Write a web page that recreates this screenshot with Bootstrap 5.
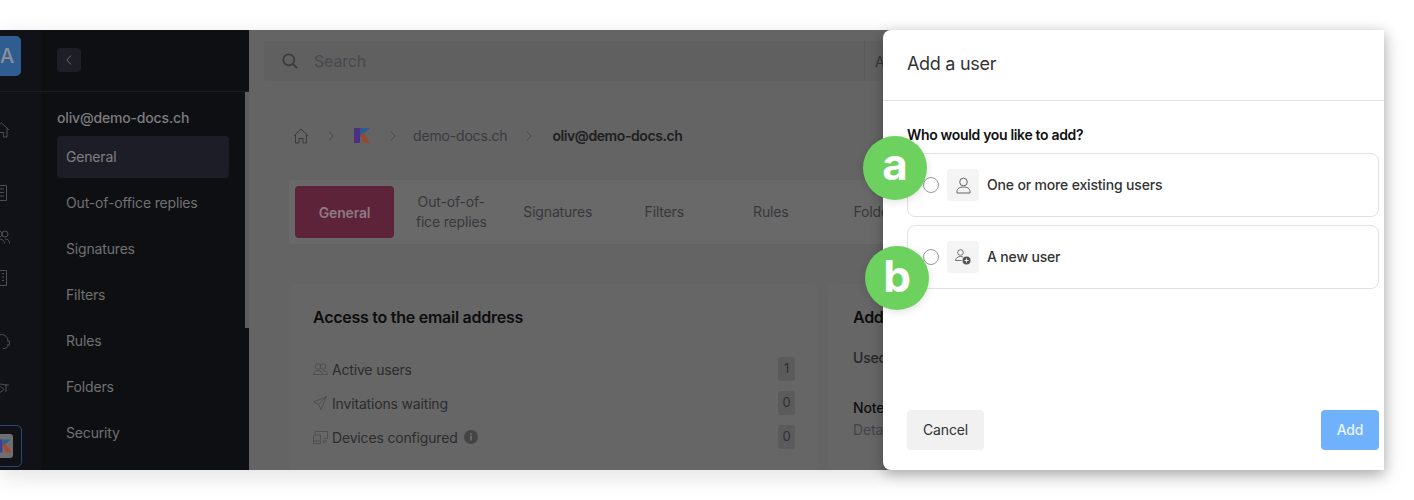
<!DOCTYPE html>
<html lang="en">
<head>
<meta charset="utf-8" />
<meta name="viewport" content="width=device-width,initial-scale=1" />
<title>Add a user</title>
<link href="https://cdn.jsdelivr.net/npm/bootstrap@5.3.3/dist/css/bootstrap.min.css" rel="stylesheet" />
<style>
  html, body { height:100%; }
  body { background:#fff; font-family:Inter,"Liberation Sans",sans-serif; font-size:14px; letter-spacing:-.17px; overflow:hidden; }
  .stage { padding:30px 30px 0 0; height:500px; }
  .app-win { position:relative; height:440px; display:flex; overflow:visible; box-shadow:0 6px 22px rgba(0,0,0,.12); background:#646465; }
  svg { display:block; flex:none; }

  /* icon rail, cut off by the left edge */
  .rail { width:41px; flex:none; background:#111217; overflow:hidden; display:flex; flex-direction:column; align-items:flex-end; padding-right:20px; color:#4d4e52; }
  .rail-head { height:62px; flex:none; margin-right:-20px; width:41px; border-bottom:1px solid #1c1d22; display:flex; justify-content:flex-end; padding:6px 20px 0 0; }
  .avatar-tile { flex:none; width:28px; height:40px; margin-left:-8px; border-radius:5px; background:#2f5d8f; color:#8a9099; font-size:20px; font-weight:500; display:flex; align-items:center; justify-content:center; }
  .rail svg { margin-right:11px; }
  .rail-k { flex:none; width:42px; height:42px; margin:0 -1px 0 0; border:1px solid #27496f; border-radius:5px; display:flex; align-items:center; justify-content:flex-end; padding-right:8px; }
  .rail-k span { width:26px; height:24px; background:#6f6f70; border-radius:3px; display:flex; align-items:center; justify-content:flex-end; padding-right:1px; }
  .rail-k svg { margin:0; }

  /* second column */
  .side { width:208px; flex:none; background:#0e0f13; position:relative; }
  .side-head { height:62px; border-bottom:1px solid #1c1d22; padding:18px 0 0 16px; }
  .back-btn { width:24px; height:24px; background:#1d1e26; border-radius:4px; color:#6c6d72; display:flex; align-items:center; justify-content:center; }
  .side-title { margin:15px 0 0 16px; font-weight:500; color:#7d7d7e; line-height:22px; }
  .side-list { margin:7px 20px 0 16px; }
  .side-item { height:42px; margin-bottom:4px; padding:0 0 2px 9px; display:flex; align-items:center; color:#717172; border-radius:4px; }
  .side-item.on { background:#1c1d26; color:#808081; }
  .side-thumb { position:absolute; right:0; top:62px; width:4px; height:236px; background:#5e5e5f; }

  /* dimmed page */
  .main-area { flex:1; min-width:0; overflow:hidden; padding:11px 0 0 15px; }
  .search-bar { height:40px; background:#606061; border-radius:4px 0 0 4px; display:flex; align-items:center; padding-left:18px; color:#3c3c3e; width:700px; }
  .search-bar .ph { margin-left:16px; font-size:16px; color:#48484c; width:551px; border-right:1px solid #5a5a5b; line-height:40px; height:40px; }
  .search-bar .rest { margin-left:10px; font-size:14px; color:#333335; }
  .page-body { margin-left:25px; width:700px; }
  .crumbs { margin-top:43px; height:24px; display:flex; align-items:center; color:#3a3a3d; padding-bottom:1px; }
  .crumbs .sep { color:#4a4a4d; }
  .crumbs strong { color:#1e1e20; font-weight:600; letter-spacing:-.42px; }
  .tab-strip { margin-top:32px; height:64px; background:#69696a; border-radius:4px 0 0 4px; padding:6px; display:flex; }
  .tab-on { width:99px; height:52px; flex:none; background:#5c2339; border-radius:4px; color:#8d7a82; font-weight:600; display:flex; align-items:center; justify-content:center; }
  .tab-cell { width:106.5px; flex:none; padding-bottom:1px; display:flex; align-items:center; justify-content:center; text-align:center; color:#38383a; line-height:20px; white-space:nowrap; }
  .tab-cell.first { margin-left:4px; }
  .card-row { margin-top:40px; display:flex; gap:10px; }
  .info-box { flex:none; height:190px; background:#666667; border-radius:6px; padding:22px 23px 22px 24px; }
  .info-box.one { width:529px; }
  .info-box.two { width:300px; padding-left:25px; }
  .info-title { font-size:16px; font-weight:600; color:#0d0d0e; line-height:22px; letter-spacing:-.26px; }
  .info-line { height:34px; display:flex; align-items:center; color:#2c2c2e; }
  .info-line svg { margin-right:4px; color:#4a4a4c; }
  .count-pill { margin-left:auto; margin-right:0; width:17px; height:24px; border-radius:3px; background:#5b5b5c; font-size:13px; color:#2f2f31; display:flex; align-items:center; justify-content:center; }
  .used-line { margin-top:19px; color:#26262a; font-weight:500; line-height:22px; }
  .note-line { margin-top:28px; color:#0f0f10; font-weight:500; line-height:22px; }
  .det-line { color:#444447; line-height:22px; }

  /* drawer over the page */
  .drawer { position:absolute; left:883px; top:0; bottom:0; right:0; background:#fff; border-radius:8px 0 0 8px; box-shadow:0 4px 14px rgba(0,0,0,.28); display:flex; flex-direction:column; }
  .drawer-top { height:71px; flex:none; border-bottom:1px solid #e2e2e2; padding:23px 0 0 24px; font-size:18px; line-height:22px; color:#333; letter-spacing:-.3px; }
  .drawer-mid { flex:1; padding:24px 5px 0 24px; }
  .ask { font-weight:600; color:#111; line-height:20px; margin-bottom:8px; letter-spacing:-.33px; }
  .opt-box { height:64px; border:1px solid #e2e2e2; border-radius:8px; margin-bottom:8px; display:flex; align-items:center; padding-left:15px; font-weight:500; color:#333; }
  .opt-box .form-check-input { width:16px; height:16px; margin:0 8px 0 0; border-color:#9a9a9a; flex:none; }
  .opt-tile { width:32px; height:32px; background:#f4f4f4; border-radius:4px; display:flex; align-items:center; justify-content:center; margin-right:8px; color:#666; }
  .opt-text { margin-bottom:2px; }
  .drawer-foot { flex:none; display:flex; justify-content:space-between; padding:0 5px 20px 24px; }
  .btn-cancel { width:77px; height:40px; background:#f1f1f1; border:0; border-radius:4px; color:#333; font-size:14px; padding:0 0 1px; letter-spacing:-.17px; }
  .btn-add { width:58px; height:40px; background:#6fb2fb; border:0; border-radius:4px; color:#eaf4ff; font-size:14px; font-weight:500; padding:0 0 1px; letter-spacing:-.17px; }
  .btn-add:disabled { background:#6fb2fb; color:#eaf4ff; opacity:1; }

  /* green callouts */
  .callout { position:absolute; width:64px; height:64px; border-radius:50%; background:#6dd160; color:#fff; font-size:44px; font-weight:700; line-height:60px; text-align:center; box-shadow:0 2px 8px rgba(0,0,0,.12); }
  .callout.a { left:863px; top:106px; line-height:56px; }
  .callout.b { left:865px; top:216px; }
</style>
</head>
<body>
<div class="stage">
  <div class="app-win">

    <div class="rail">
      <div class="rail-head"><div class="avatar-tile">A</div></div>
      <svg style="margin-top:30px" width="17" height="16" viewBox="0 0 17 16" fill="none" stroke="currentColor"><path d="M1 8 8.500 1 16 8M3 6.500V15h3.500v-4.500h4V15H14V6.500"/></svg>
      <svg style="margin-top:47px;margin-right:13px" width="14" height="16" viewBox="0 0 14 16" fill="none" stroke="currentColor"><path d="M1.500.5h11v15h-11zM4 4h6M4 7.500h6M4 11h6"/></svg>
      <svg style="margin-top:29px" width="17" height="14" viewBox="0 0 17 14" fill="none" stroke="currentColor"><circle cx="6" cy="4" r="3"/><circle cx="12" cy="4" r="3"/><path d="M.5 13.500c0-3 2.500-4.500 5.500-4.500s5.500 1.500 5.500 4.500M12 9c3 0 4.500 1.500 4.500 4.500"/></svg>
      <svg style="margin-top:26px;margin-right:13px" width="14" height="16" viewBox="0 0 14 16" fill="none" stroke="currentColor"><path d="M1.500.5h11v15h-11zM4 3.500h2M8 3.500h2M4 7h2M8 7h2M4 10.500h2M8 10.500h2"/></svg>
      <svg style="margin-top:48px" width="17" height="16" viewBox="0 0 17 16" fill="none" stroke="currentColor"><path d="M2 8V7a6.500 6.500 0 0 1 13 0v1M2 7h-1v4h2V7zM15 7h1.500v4H14M15 11c0 2.500-2 3.500-5 3.500"/></svg>
      <svg style="margin-top:33px" width="17" height="10" viewBox="0 0 17 10" fill="none" stroke="currentColor"><path d="M1 2h4l3-1 4 1h4M1 8h3l3 1.500 4-3-3-3-2 1M13 1v8"/></svg>
      <div class="rail-k" style="margin-top:32px">
        <span><svg width="14" height="14" viewBox="0 0 16 15"><path d="M0 0h5v15H0z" fill="#3d3f8e"/><path d="M5 0h10L5 8z" fill="#2e5f96"/><path d="M5 6l3-2 8 11H9z" fill="#a6492f"/></svg></span>
      </div>
    </div>

    <div class="side">
      <div class="side-head">
        <div class="back-btn"><svg width="6" height="10" viewBox="0 0 6 10" fill="none" stroke="currentColor"><path d="M5 .5.8 5 5 9.500"/></svg></div>
      </div>
      <div class="side-title">oliv@demo-docs.ch</div>
      <div class="side-list">
        <div class="side-item on">General</div>
        <div class="side-item">Out-of-office replies</div>
        <div class="side-item">Signatures</div>
        <div class="side-item">Filters</div>
        <div class="side-item">Rules</div>
        <div class="side-item">Folders</div>
        <div class="side-item">Security</div>
      </div>
      <div class="side-thumb"></div>
    </div>

    <div class="main-area">
      <div class="search-bar">
        <svg width="16" height="16" viewBox="0 0 16 16" fill="none" stroke="currentColor" stroke-width="1.800"><circle cx="6.800" cy="6.800" r="5.500"/><path d="m11 11 4.200 4.200"/></svg>
        <div class="ph">Search</div>
        <div class="rest">All</div>
      </div>
      <div class="page-body">
        <div class="crumbs">
          <svg class="ms-1" width="16" height="16" viewBox="0 0 16 16" fill="none" stroke="currentColor"><path d="M.8 8 8 1l7.200 7M2.500 6.500V15h3.500v-4.500h4V15h3.500V6.500"/></svg>
          <svg class="sep" style="margin-left:19px" width="6" height="10" viewBox="0 0 6 10" fill="none" stroke="currentColor"><path d="M.8.500 5 5 .8 9.500"/></svg>
          <svg style="margin-left:20px" width="16" height="15" viewBox="0 0 16 15"><path d="M0 0h6v15H0z" fill="#4b2f82"/><path d="M6 0h10L6 9z" fill="#2b5d94"/><path d="M6 7l3-2.500L16 15H10z" fill="#98492b"/></svg>
          <svg class="sep" style="margin-left:20px" width="6" height="10" viewBox="0 0 6 10" fill="none" stroke="currentColor"><path d="M.8.500 5 5 .8 9.500"/></svg>
          <span style="margin-left:17px">demo-docs.ch</span>
          <svg class="sep" style="margin-left:19px" width="6" height="10" viewBox="0 0 6 10" fill="none" stroke="currentColor"><path d="M.8.500 5 5 .8 9.500"/></svg>
          <strong style="margin-left:20px">oliv@demo-docs.ch</strong>
        </div>
        <div class="tab-strip">
          <div class="tab-on">General</div>
          <div class="tab-cell first">Out-of-of-<br>fice replies</div>
          <div class="tab-cell">Signatures</div>
          <div class="tab-cell">Filters</div>
          <div class="tab-cell">Rules</div>
          <div class="tab-cell">Folders</div>
        </div>
        <div class="card-row">
          <div class="info-box one">
            <div class="info-title">Access to the email address</div>
            <div style="height:24px"></div>
            <div class="info-line">
              <svg width="15" height="13" viewBox="0 0 15 13" fill="none" stroke="currentColor" stroke-width=".8"><circle cx="5" cy="3.500" r="2.800"/><circle cx="10" cy="3.500" r="2.800"/><path d="M.5 11.500c0-2.500 2-4 4.500-4s4.500 1.500 4.500 4h-9zM10 7.500c2.500 0 4.500 1.500 4.500 4H11"/></svg>
              <span>Active users</span><span class="count-pill">1</span>
            </div>
            <div class="info-line">
              <svg width="14" height="14" viewBox="0 0 14 14" fill="none" stroke="currentColor" stroke-width=".8"><path d="M13.500.5.500 6l5 2.500L8 13.500zM13.500.5l-8 8"/></svg>
              <span style="margin-left:1px">Invitations waiting</span><span class="count-pill">0</span>
            </div>
            <div class="info-line">
              <svg width="15" height="14" viewBox="0 0 15 14" fill="none" stroke="currentColor" stroke-width=".8"><path d="M2 4V1.500h12.500v7H11M.5 5h7v8.500h-7zM.5 11h7M9.500 11H14M11 11v2.500"/></svg>
              <span>Devices configured</span>
              <svg style="margin:0 0 0 6px;color:#444" width="14" height="14" viewBox="0 0 14 14"><circle cx="7" cy="7" r="7" fill="currentColor"/><path d="M6.200 6h1.600v4.500H6.200zM6.200 3.300h1.600v1.500H6.200z" fill="#777"/></svg>
              <span class="count-pill">0</span>
            </div>
          </div>
          <div class="info-box two">
            <div class="info-title">Additional information</div>
            <div class="used-line">Used</div>
            <div class="note-line">Note</div>
            <div class="det-line">Details</div>
          </div>
        </div>
      </div>
    </div>

    <div class="drawer">
      <div class="drawer-top">Add a user</div>
      <div class="drawer-mid">
        <div class="ask">Who would you like to add?</div>
        <label class="opt-box">
          <input class="form-check-input" type="radio" name="who">
          <span class="opt-tile"><svg width="15" height="17" viewBox="0 0 15 17" fill="none" stroke="currentColor"><circle cx="7.500" cy="5" r="3.800"/><path d="M1 16v-1.500c0-3 2.500-4.500 6.500-4.500s6.500 1.500 6.500 4.500V16z"/></svg></span>
          <span class="opt-text">One or more existing users</span>
        </label>
        <label class="opt-box">
          <input class="form-check-input" type="radio" name="who">
          <span class="opt-tile"><svg width="16" height="16" viewBox="0 0 16 16" fill="none" stroke="currentColor" stroke-width=".9"><circle cx="5.500" cy="3.500" r="2.800"/><path d="M.6 11.500c0-2.500 2-4 4.900-4 1 0 2 .2 2.700.6M.6 11.500h6"/><circle cx="11.500" cy="11.500" r="4" fill="#555" stroke="none"/><path d="M9.500 11.500h4M11.500 9.500v4" stroke="#fff"/></svg></span>
          <span class="opt-text">A new user</span>
        </label>
      </div>
      <div class="drawer-foot">
        <button type="button" class="btn btn-cancel">Cancel</button>
        <button type="button" class="btn btn-add" disabled>Add</button>
      </div>
    </div>

    <div class="callout a">a</div>
    <div class="callout b">b</div>
  </div>
</div>
<script src="https://cdn.jsdelivr.net/npm/bootstrap@5.3.3/dist/js/bootstrap.bundle.min.js"></script>
</body>
</html>
